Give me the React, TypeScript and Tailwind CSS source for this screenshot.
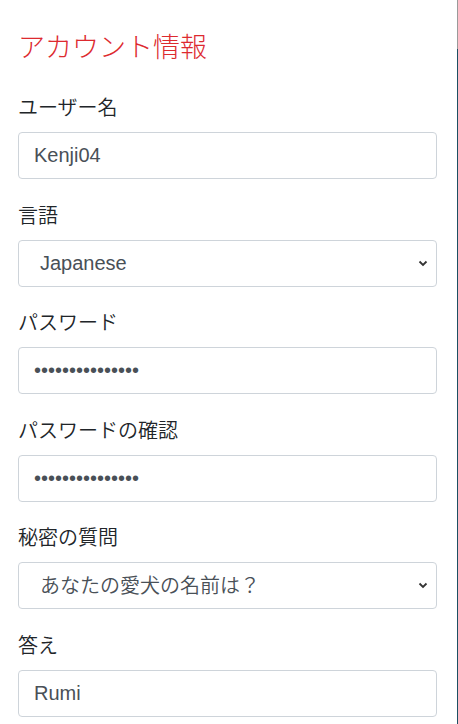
import React from "react";

const jp = '"Noto Sans CJK JP", "Liberation Sans", sans-serif';

const Chevron = () => (
  <svg width="10" height="7" viewBox="0 0 10 7" className="shrink-0">
    <polyline points="1.5,1.5 5,5 8.5,1.5" fill="none" stroke="#333" strokeWidth="1.8" />
  </svg>
);

const Field = ({ label, children }: { label: string; children: React.ReactNode }) => (
  <div className="mb-[20.6px]">
    <label className="block h-[30px] mb-[10px] text-[20px] leading-[30px] font-[350] text-[#212529]">{label}</label>
    {children}
  </div>
);

const TextBox = ({ value, type = "text" }: { value: string; type?: string }) => (
  <input
    type={type}
    readOnly
    defaultValue={value}
    className="block w-full h-[47px] px-[15px] border border-[#ced4da] rounded-[4px] bg-white text-[20px] text-[#495057] outline-none"
    style={{ fontFamily: '"Liberation Sans", Arial, sans-serif' }}
  />
);

const SelectBox = ({ value }: { value: string }) => (
  <div className="flex items-center justify-between h-[47px] pl-[21px] pr-[8px] border border-[#ced4da] rounded-[4px] bg-white text-[20px] text-[#495057]">
    <span className="font-[350]" style={{ fontFamily: '"Liberation Sans", "Noto Sans CJK JP", sans-serif' }}>
      {value}
    </span>
    <Chevron />
  </div>
);

const App = (): JSX.Element => {
  return (
    <div className="flex w-[458px] h-[724px] overflow-hidden bg-white" style={{ fontFamily: jp }}>
      <main className="flex-1 pl-[18px] pr-[20px] pt-[28px]">
        <h2 className="h-[36px] mb-[28px] text-[27px] leading-[36px] font-light text-[#dd2a2f]">アカウント情報</h2>

        <Field label="ユーザー名">
          <TextBox value="Kenji04" />
        </Field>
        <Field label="言語">
          <SelectBox value="Japanese" />
        </Field>
        <Field label="パスワード">
          <TextBox type="password" value="kenjipassword04" />
        </Field>
        <Field label="パスワードの確認">
          <TextBox type="password" value="kenjipassword04" />
        </Field>
        <Field label="秘密の質問">
          <SelectBox value="あなたの愛犬の名前は？" />
        </Field>
        <Field label="答え">
          <TextBox value="Rumi" />
        </Field>
      </main>
      {/* window edge */}
      <div className="flex flex-col w-px">
        <div className="h-[49px] bg-[#9a9a9a]" />
        <div className="flex-1 bg-[#1d4f63]" />
      </div>
    </div>
  );
};

export default App;
